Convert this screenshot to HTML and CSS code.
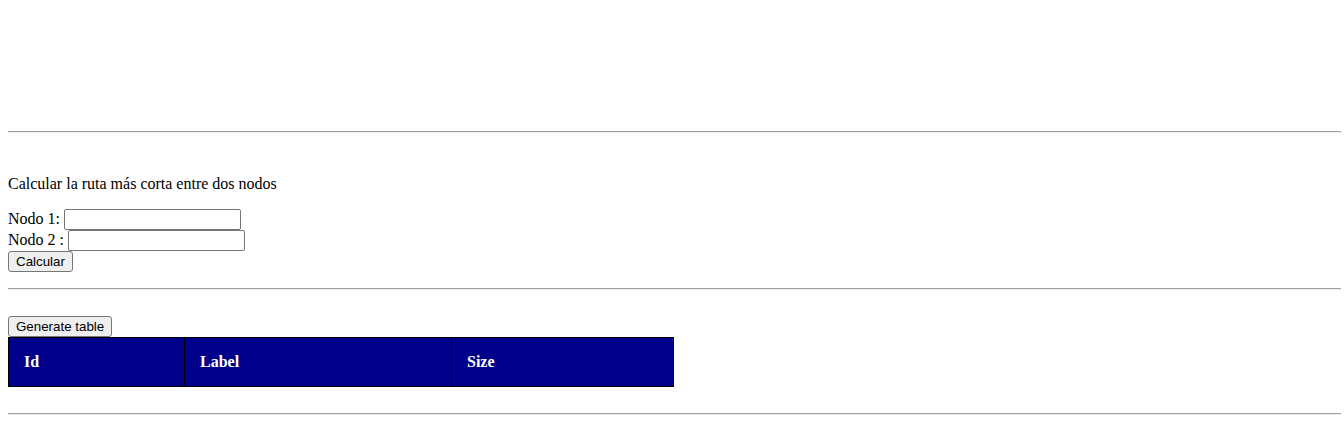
FILE: index.html
```html
<!DOCTYPE html>
<html>
<head>
<meta charset="utf-8">
<link rel="stylesheet" href="styles.css">
</head>
<body>
<div class="graph"></div>
<hr class="rule">
<p class="title">Calcular la ruta más corta entre dos nodos</p>
<form class="route-form">
  <label class="field">Nodo 1: <input type="text" class="text-input"></label><br>
  <label class="field">Nodo 2 : <input type="text" class="text-input"></label><br>
  <button type="button" class="btn">Calcular</button>
</form>
<hr class="rule">
<div class="table-section">
  <button type="button" class="btn btn-block">Generate table</button>
  <table class="data-table">
    <thead>
      <tr>
        <th class="col-id">Id</th>
        <th class="col-label">Label</th>
        <th class="col-size">Size</th>
      </tr>
    </thead>
  </table>
</div>
<hr class="rule">
</body>
</html>
```

FILE: styles.css
```css
html, body {
  background: #ffffff;
}
body {
  margin: 8px 3px 8px 8px;
  font-family: "Liberation Serif", "Times New Roman", serif;
  font-size: 16px;
  color: #000;
}
.graph {
  height: 115px;
}
.rule {
  margin: 8px 0;
  border: 0;
  border-top: 1px solid #a0a0a0;
  border-bottom: 1px solid #eeeeee;
  height: 0;
}
.title {
  margin: 42px 0 16px;
}
.route-form {
  margin: 0 0 16px;
}
.text-input {
  font-family: "Liberation Sans", Arial, sans-serif;
  font-size: 13.33px;
  width: 177px;
  height: 21px;
  box-sizing: border-box;
  border: 1px solid #767676;
  border-radius: 2px;
  padding: 1px 2px;
  margin: 0;
  vertical-align: baseline;
}
.btn {
  font-family: "Liberation Sans", Arial, sans-serif;
  font-size: 13.33px;
  color: #000;
  background: #efefef;
  border: 1px solid #767676;
  border-radius: 3px;
  padding: 1px 7px;
  height: 21px;
  box-sizing: border-box;
  margin: 0;
}
.table-section {
  padding-top: 18px;
  padding-bottom: 18px;
}
.btn-block {
  display: block;
}
.data-table {
  border-collapse: collapse;
  width: 662px;
  table-layout: fixed;
  border: 1px solid #000;
}
.data-table th {
  background: #00008b;
  color: #fff;
  font-weight: bold;
  text-align: left;
  padding: 15px;
  border: 1px solid #000;
  line-height: 18px;
}
.col-id { width: 145px; }
.col-label { width: 236px; }
.col-size { width: 191px; }
```
